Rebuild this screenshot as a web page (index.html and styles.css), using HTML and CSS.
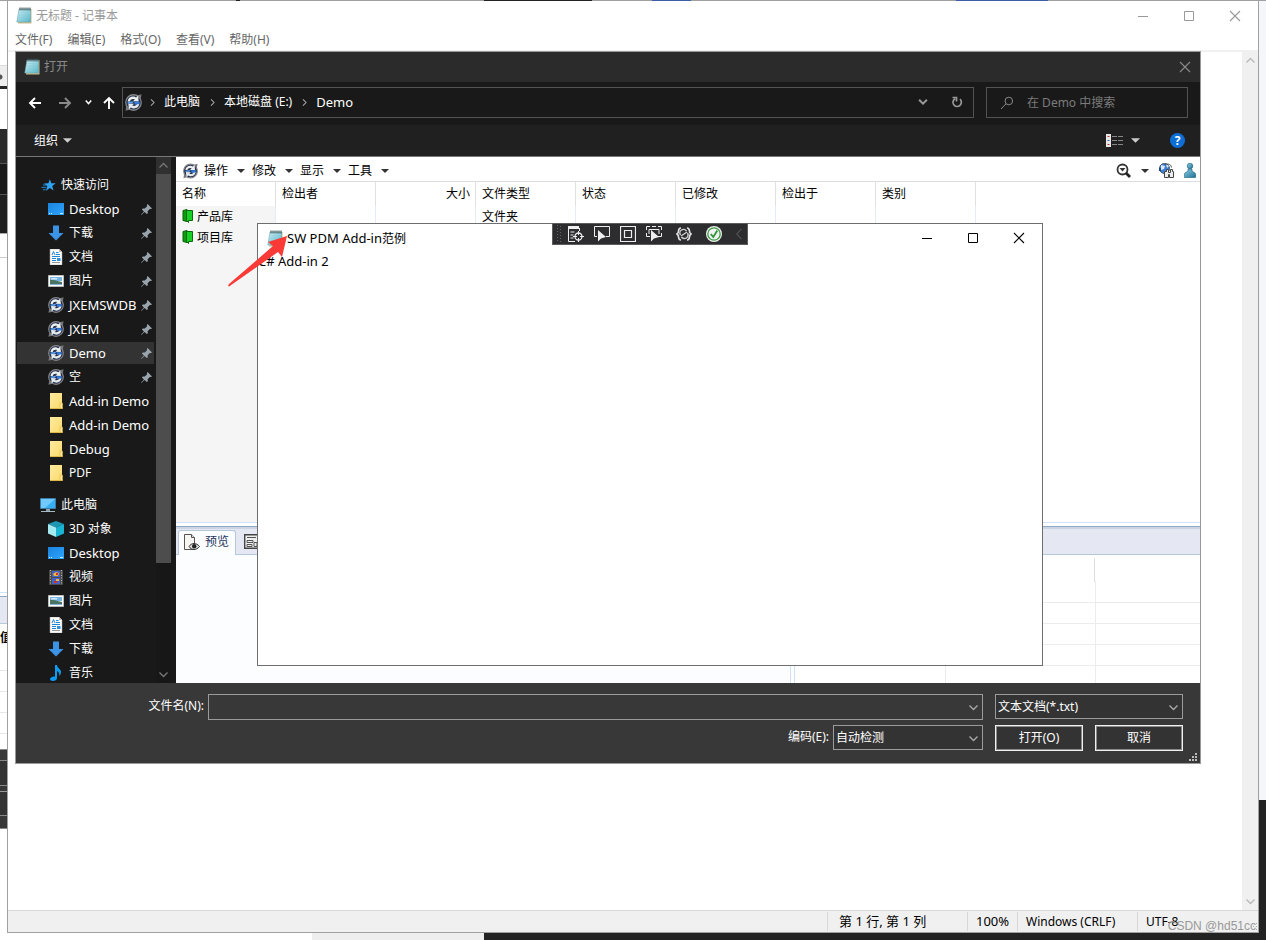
FILE: index.html
```html
<!DOCTYPE html>
<html lang="zh-CN">
<head>
<meta charset="utf-8">
<title>无标题 - 记事本</title>
<link rel="stylesheet" href="styles.css">
</head>
<body class="desktop">
<svg class="defs" aria-hidden="true">
  <defs>
    <linearGradient id="pad" x1="0" y1="0" x2="1" y2="1"><stop offset="0" stop-color="#d5f3f8"/><stop offset="1" stop-color="#4fb3c6"/></linearGradient>
    <linearGradient id="blue" x1="0" y1="0" x2="1" y2="1"><stop offset="0" stop-color="#1a83dd"/><stop offset="1" stop-color="#2ea5ff"/></linearGradient>
    <linearGradient id="fold" x1="0" y1="0" x2="1" y2="1"><stop offset="0" stop-color="#ffeaa0"/><stop offset="1" stop-color="#fbd96b"/></linearGradient>
    <linearGradient id="man" x1="0" y1="0" x2="1" y2="1"><stop offset="0" stop-color="#8fd0e8"/><stop offset="1" stop-color="#1d6f92"/></linearGradient>
  </defs>
  <symbol id="i-notepad" viewBox="0 0 16 17">
    <path d="M4 2h11.500v14.500H2z" fill="#c9b98b"/><path d="M3 2h11.500v13H.8z" fill="url(#pad)" stroke="#6fa9b4" stroke-width=".6"/>
    <path d="M3.500 5.500h10M3.200 8h10M3 10.500h10M2.500 13h10" stroke="#8ccbd6" stroke-width=".6"/>
    <path d="M4 .5v3M6 .5v3M8 .5v3M10 .5v3M12 .5v3M14 .5v3" stroke="#35484d" stroke-width="1"/>
  </symbol>
  <symbol id="i-vault" viewBox="0 0 16 16">
    <circle cx="8" cy="8" r="7.300" fill="#24324a" stroke="#85858a" stroke-width="1.200"/>
    <path d="M11 1.500L15.500.3 14.800 5zM5 14.500L.5 15.700 1.200 11z" fill="#77777c"/>
    <path d="M2.500 7C2.800 3.800 5.500 2 8.500 2.400l2 .8 1.800-1.700.6 5.500-5.400-.2 1.700-1.700C7 4.300 5.200 5 4.700 7z" fill="#eceef0"/>
    <path d="M13.500 9C13.200 12.200 10.500 14 7.500 13.600l-2-.8-1.800 1.700L3.100 9l5.400.2-1.700 1.700c2.200.8 4 .1 4.500-1.900z" fill="#e4e8ec"/>
    <path d="M8.500 7.300l5.300-.3-.3 2.300-4.200.9z" fill="#3578da"/><path d="M2.600 7.600l5.600-.8-1.200 1.900-4.400.4z" fill="#5ba0f0"/>
  </symbol>
  <symbol id="i-star" viewBox="0 0 16 16"><path d="M9.500 1.200l1.500 4.300 4.600.2-3.600 2.900 1.300 4.700-3.800-2.600-4.200 2.800 1.400-4.900L3 5.900l4.800-.3z" fill="#2ea3f2"/><path d="M2 7.500h4M.5 10h5M2 12.500h3" stroke="#2690dc"/></symbol>
  <symbol id="i-desktop" viewBox="0 0 16 16"><path d="M0 2h16v12H0z" fill="url(#blue)"/><path d="M1 12.500h1M3 12.500h1M12 12.500h3" stroke="#cdeaff"/></symbol>
  <symbol id="i-down" viewBox="0 0 16 16"><path d="M5 .5h6V8h4.500L8 15.500.5 8H5z" fill="#3c93e6"/></symbol>
  <symbol id="i-doc" viewBox="0 0 16 16"><path d="M2 0h9l3 3v13H2z" fill="#fafafa" stroke="#aaa" stroke-width=".5"/><path d="M11 0v3h3" fill="#bbb"/><path d="M4 6l1.500-3.500L7 6M8 3.500h2.500M8 5.500h4M4 7.500h8M4 9.500h4M4 11.500h4" stroke="#1f86d8" fill="none"/><path d="M9 9h3.500v3H9z" fill="#2c91df"/><path d="M4 13.500h8" stroke="#999"/></symbol>
  <symbol id="i-pic" viewBox="0 0 16 16"><path d="M.5 2.500h15v11H.5z" fill="#fff" stroke="#bbb"/><path d="M2 4h12v4H2z" fill="#75b5e4"/><path d="M2 7c3-1 6 1 12 2v3H2z" fill="#4a7565"/><path d="M2 11h12v1H2z" fill="#7fb0d8"/><path d="M3 5h6v1.500H3z" fill="#d8ecf8"/></symbol>
  <symbol id="i-folder" viewBox="0 0 16 16"><path d="M2 0h12v16H2z" fill="url(#fold)"/><path d="M12 10h2.500v6H12z" fill="#ffe796" stroke="#d9b13c" stroke-width=".6"/><path d="M2 15.500h12" stroke="#dfb849"/></symbol>
  <symbol id="i-pc" viewBox="0 0 16 16"><path d="M.5 1.500h15v10H.5z" fill="#38aef5" stroke="#3d7ea6"/><path d="M1 2h14L5 11H1z" fill="#71caff"/><path d="M6 12h4v2H6z" fill="#8ca2ae"/><path d="M1 14.500h14" stroke="#a7bac4"/></symbol>
  <symbol id="i-cube" viewBox="0 0 16 16"><path d="M8 0l8 3-8 3.500L0 3z" fill="#1c98b4"/><path d="M0 3l8 3.500V16l-8-3.500z" fill="#a5eaf0"/><path d="M16 3L8 6.500V16l8-3.500z" fill="#18b4d2"/></symbol>
  <symbol id="i-video" viewBox="0 0 16 16"><path d="M1 1h14v15H1z" fill="#4a4a4a"/><path d="M2.500 1v15M13.500 1v15" stroke="#bbb" stroke-dasharray="1 1.500"/><path d="M4 2h8v6H4z" fill="#4461c8"/><path d="M4 9h8v6H4z" fill="#4461c8"/><path d="M5 5l3-2 3 1-1 3H6z" fill="#f3b53a"/><path d="M8 4h2v2H8zM6 12h3v2H6z" fill="#cc3325"/><path d="M8 10h3v2H8z" fill="#efb33c"/></symbol>
  <symbol id="i-music" viewBox="0 0 16 16"><path d="M7 0h2c0 3 4 4 4 7 0 2-1 3-2 4 .5-2 .5-4-2-5v7c0 2-2 3-4 3s-3-1-3-2 2-3 5-2.500z" fill="#0d9af2"/></symbol>
  <symbol id="i-pin" viewBox="0 0 10 10"><path d="M6 0l4 4-1 .6-1-.1-2 2 .2 1.800-.9.9L3.200 7.300.3 10 0 9.700l2.700-2.900L.8 4.900l.9-.9 1.800.1 2-2L5.400 1z" fill="#9aa4ae"/></symbol>
  <symbol id="i-book" viewBox="0 0 12 14"><path d="M1 1.500L5 .5v12l-4-1z" fill="#0c9c0c" stroke="#0a5f0a"/><path d="M4.500 1.500h6v10h-4v2l-2-2z" fill="#18cf23" stroke="#076a0c"/></symbol>
  <symbol id="i-chev" viewBox="0 0 9 9"><path d="M.5 2.500l4 4 4-4" fill="none" stroke="currentColor" stroke-width="1.300"/></symbol>
  <symbol id="i-tri" viewBox="0 0 8 8"><path d="M0 2h8L4 6z" fill="currentColor"/></symbol>
  <symbol id="i-x" viewBox="0 0 12 12"><path d="M1 1l10 10M11 1L1 11" stroke="currentColor" stroke-width="1.100"/></symbol>
  <symbol id="i-max" viewBox="0 0 12 12"><path d="M1.500 1.500h9v9h-9z" fill="none" stroke="currentColor"/></symbol>
  <symbol id="i-min" viewBox="0 0 12 12"><path d="M1 6.500h10" stroke="currentColor"/></symbol>
  <symbol id="i-arrow" viewBox="0 0 14 14"><path d="M13 7H2M7 2L2 7l5 5" fill="none" stroke="currentColor" stroke-width="1.900"/></symbol>
</svg>

<div class="edge edge-top"></div>
<div class="edge edge-left">
  <i class="e1"></i><i class="e2"></i><i class="e3"></i><i class="e4"></i><i class="e5"></i><i class="e6"></i><i class="e7"></i><i class="e8"></i><i class="e9"></i><span class="e10">值</span><i class="e11"></i><i class="e12"></i><i class="e13"></i><i class="e14"></i>
</div>
<div class="edge edge-right"></div>
<div class="edge edge-bottom"></div>

<main class="notepad">
  <header class="np-title"><svg width="16" height="17"><use href="#i-notepad"/></svg><h1>无标题 - 记事本</h1>
    <div class="winbtns"><button aria-label="最小化"><svg width="12" height="12"><use href="#i-min"/></svg></button><button aria-label="最大化"><svg width="12" height="12"><use href="#i-max"/></svg></button><button aria-label="关闭"><svg width="12" height="12"><use href="#i-x"/></svg></button></div>
  </header>
  <nav class="np-menu"><button>文件(F)</button><button>编辑(E)</button><button>格式(O)</button><button>查看(V)</button><button>帮助(H)</button></nav>
  <div class="np-body"><textarea class="np-text" aria-label="正文"></textarea>
    <div class="np-scroll"><svg class="up" width="9" height="9"><use href="#i-chev"/></svg><svg width="9" height="9"><use href="#i-chev"/></svg></div></div>
  <footer class="np-status"><span class="s1">第 1 行, 第 1 列</span><span class="s2">100%</span><span class="s3">Windows (CRLF)</span><span class="s4">UTF-8</span></footer>
</main>

<section class="dialog">
  <header class="dl-title"><svg width="16" height="17"><use href="#i-notepad"/></svg><h2>打开</h2><button aria-label="关闭"><svg width="12" height="12"><use href="#i-x"/></svg></button></header>
  <div class="dl-nav">
    <div class="arrows">
      <button aria-label="后退"><svg width="14" height="14"><use href="#i-arrow"/></svg></button>
      <button class="fwd" aria-label="前进"><svg width="14" height="14"><use href="#i-arrow"/></svg></button>
      <button class="hist" aria-label="历史"><svg width="7" height="7" viewBox="0 0 9 9"><path d="M1 2l3.500 4L8 2" fill="none" stroke="currentColor" stroke-width="2"/></svg></button>
      <button class="upa" aria-label="上移"><svg width="14" height="14"><use href="#i-arrow"/></svg></button>
    </div>
    <div class="address">
      <svg width="17" height="17"><use href="#i-vault"/></svg>
      <svg class="sep" width="7" height="7"><use href="#i-chev"/></svg><a href="#">此电脑</a>
      <svg class="sep" width="7" height="7"><use href="#i-chev"/></svg><a href="#">本地磁盘 (E:)</a>
      <svg class="sep" width="7" height="7"><use href="#i-chev"/></svg><a href="#">Demo</a>
      <button class="drop" aria-label="以前的位置"><svg width="10" height="10" viewBox="0 0 9 9"><path d="M1 2.500l3.500 3.500L8 2.500" fill="none" stroke="currentColor" stroke-width="1.800"/></svg></button>
      <button class="reload" aria-label="刷新"><svg width="12" height="12" viewBox="0 0 12 12"><path d="M9 3.200A4.200 4.200 0 1 1 4 2.700M1.500 1.500h4v4" fill="none" stroke="currentColor" stroke-width="1.700"/></svg></button>
    </div>
    <label class="search"><svg width="14" height="14" viewBox="0 0 14 14"><circle cx="8.800" cy="5" r="3.800" fill="none" stroke="currentColor"/><path d="M6 7.800L1 13" stroke="currentColor"/></svg><input type="search" placeholder="在 Demo 中搜索"></label>
  </div>
  <div class="dl-cmd">
    <button class="org">组织 <svg width="9" height="9"><use href="#i-tri"/></svg></button>
    <button class="view" aria-label="视图"><svg width="17" height="13" viewBox="0 0 17 13"><path d="M0 0h5v13H0z" fill="#e8e8e8"/><path d="M1.500 2.500h2M1.500 10.500h2" stroke="#b33"/><path d="M1.500 6.500h2" stroke="#36b"/><path d="M6 2.500h11M6 6.500h11M6 10.500h11" stroke="#888" stroke-dasharray="5 1"/></svg><svg width="9" height="9"><use href="#i-tri"/></svg></button>
    <button class="help">?</button>
  </div>

  <div class="dl-main">
    <aside class="side">
      <ul class="tree">
        <li class="root"><svg width="15" height="15"><use href="#i-star"/></svg>快速访问</li>
        <li><svg width="16" height="16"><use href="#i-desktop"/></svg><span class="lat">Desktop</span><svg class="pin"><use href="#i-pin"/></svg></li>
        <li><svg width="16" height="16"><use href="#i-down"/></svg><span>下载</span><svg class="pin"><use href="#i-pin"/></svg></li>
        <li><svg width="16" height="16"><use href="#i-doc"/></svg><span>文档</span><svg class="pin"><use href="#i-pin"/></svg></li>
        <li><svg width="16" height="16"><use href="#i-pic"/></svg><span>图片</span><svg class="pin"><use href="#i-pin"/></svg></li>
        <li><svg width="16" height="16"><use href="#i-vault"/></svg><span class="lat">JXEMSWDB</span><svg class="pin"><use href="#i-pin"/></svg></li>
        <li><svg width="16" height="16"><use href="#i-vault"/></svg><span class="lat">JXEM</span><svg class="pin"><use href="#i-pin"/></svg></li>
        <li class="on"><svg width="16" height="16"><use href="#i-vault"/></svg><span class="lat">Demo</span><svg class="pin"><use href="#i-pin"/></svg></li>
        <li><svg width="16" height="16"><use href="#i-vault"/></svg><span>空</span><svg class="pin"><use href="#i-pin"/></svg></li>
        <li><svg width="16" height="16"><use href="#i-folder"/></svg><span class="lat">Add-in Demo</span></li>
        <li><svg width="16" height="16"><use href="#i-folder"/></svg><span class="lat">Add-in Demo</span></li>
        <li><svg width="16" height="16"><use href="#i-folder"/></svg><span class="lat">Debug</span></li>
        <li><svg width="16" height="16"><use href="#i-folder"/></svg><span>PDF</span></li>
      </ul>
      <ul class="tree">
        <li class="root pc"><svg width="16" height="16"><use href="#i-pc"/></svg>此电脑</li>
        <li><svg width="16" height="16"><use href="#i-cube"/></svg><span>3D 对象</span></li>
        <li><svg width="16" height="16"><use href="#i-desktop"/></svg><span class="lat">Desktop</span></li>
        <li><svg width="16" height="16"><use href="#i-video"/></svg><span>视频</span></li>
        <li><svg width="16" height="16"><use href="#i-pic"/></svg><span>图片</span></li>
        <li><svg width="16" height="16"><use href="#i-doc"/></svg><span>文档</span></li>
        <li><svg width="16" height="16"><use href="#i-down"/></svg><span>下载</span></li>
        <li><svg width="16" height="16"><use href="#i-music"/></svg><span>音乐</span></li>
      </ul>
    </aside>
    <div class="side-scroll"><svg class="up" width="9" height="9"><use href="#i-chev"/></svg><div class="thumb"></div><svg width="9" height="9"><use href="#i-chev"/></svg></div>

    <div class="vault">
      <div class="vt-bar">
        <svg width="15" height="16"><use href="#i-vault"/></svg>
        <button>操作<svg width="8" height="8"><use href="#i-tri"/></svg></button><button>修改<svg width="8" height="8"><use href="#i-tri"/></svg></button><button>显示<svg width="8" height="8"><use href="#i-tri"/></svg></button><button>工具<svg width="8" height="8"><use href="#i-tri"/></svg></button>
        <div class="vt-right">
          <svg width="15" height="15" viewBox="0 0 15 15"><circle cx="6.500" cy="6.500" r="5" fill="none" stroke="#333" stroke-width="1.800"/><path d="M3.500 5h6l-3 3.500z" fill="#333"/><path d="M10 10l4 4" stroke="#222" stroke-width="2.800"/></svg>
          <svg class="t" width="8" height="8"><use href="#i-tri"/></svg>
          <svg width="15" height="15" viewBox="0 0 15 15"><circle cx="5.500" cy="5.500" r="5" fill="#3d7fd6" stroke="#456"/><path d="M2 2l4 1-1 3-3 1zM7 1l3 2-2 2z" fill="#dfe8ee"/><path d="M0 5h2v3H0z" fill="#174a86"/><path d="M6 1.500c4-1 6 0 6.500 3" fill="none" stroke="#444"/><path d="M5.500 8.500h2v-2h2v3h2v-3h2v2h1v6h-4v-3h-1v3h-4z" fill="#eee" stroke="#444"/></svg>
          <svg width="12" height="15" viewBox="0 0 12 15"><circle cx="6" cy="3" r="2.800" fill="url(#man)" stroke="#1a5e7c" stroke-width=".6"/><path d="M4 6h4v2l3 2c1 1 1 3 .5 4.500H.5C0 13 0 11 1 10l3-2z" fill="url(#man)" stroke="#1a5e7c" stroke-width=".6"/></svg>
        </div>
      </div>
      <div class="vt-list">
        <table class="files">
          <colgroup><col class="c"><col class="c"><col class="c"><col class="c"><col class="c"><col class="c"><col class="c"><col class="c"><col></colgroup>
          <thead><tr><th>名称</th><th>检出者</th><th class="num">大小</th><th>文件类型</th><th>状态</th><th>已修改</th><th>检出于</th><th>类别</th><th></th></tr></thead>
          <tbody>
            <tr><td><svg width="12" height="14"><use href="#i-book"/></svg>产品库</td><td></td><td></td><td>文件夹</td><td></td><td></td><td></td><td></td><td></td></tr>
            <tr><td><svg width="12" height="14"><use href="#i-book"/></svg>项目库</td><td></td><td></td><td></td><td></td><td></td><td></td><td></td><td></td></tr>
            <tr class="rest"><td></td><td></td><td></td><td></td><td></td><td></td><td></td><td></td><td></td></tr>
          </tbody>
        </table>
      </div>
      <div class="tabs">
        <button class="tab on"><svg width="17" height="17" viewBox="0 0 17 17"><path d="M1.500.5h7l3 3v12h-10z" fill="#f6f6f2" stroke="#555"/><path d="M8.500.5v3h3" fill="#ddd" stroke="#555"/><path d="M6 12.500c2.500-4 7.500-4 10.500 0-3 4-8 4-10.500 0z" fill="#ddd" stroke="#333"/><circle cx="11.200" cy="12.300" r="2.200" fill="#222"/></svg>预览</button>
        <button class="tab" aria-label="数据卡"><svg width="16" height="15" viewBox="0 0 16 15"><path d="M.7.700h14.600v13.600H.7z" fill="#eee" stroke="#444" stroke-width="1.400"/><path d="M3 3.500h9M3 6.500h6v2H3zM3 10.500h5v2H3zM10 8.500h3v4h-3z" fill="none" stroke="#555"/></svg></button>
      </div>
      <div class="lower"><div class="preview"></div><div class="split"></div>
        <div class="grid"><i class="gh"></i><i></i><i></i><i></i></div></div>
    </div>
  </div>

  <form class="dl-foot">
    <div class="frow"><label class="fl" for="fn">文件名(N):</label><span class="combo"><input id="fn" type="text"><svg width="9" height="9"><use href="#i-chev"/></svg></span>
      <span class="combo type"><select aria-label="文件类型"><option>文本文档(*.txt)</option></select><svg width="9" height="9"><use href="#i-chev"/></svg></span></div>
    <div class="frow second"><label for="enc">编码(E):</label><span class="combo enc"><select id="enc"><option>自动检测</option></select><svg width="9" height="9"><use href="#i-chev"/></svg></span>
      <div class="acts"><button type="button">打开(O)</button><button type="button">取消</button></div></div>
    <svg class="grip" width="9" height="9" viewBox="0 0 9 9"><path d="M7 0h2v2H7zM4 3h2v2H4zM7 3h2v2H7zM1 6h2v2H1zM4 6h2v2H4zM7 6h2v2H7z" fill="#bbb"/></svg>
  </form>
</section>

<section class="popup">
  <header class="pp-title"><svg width="16" height="17"><use href="#i-notepad"/></svg><h2><span class="lat">SW PDM Add-in</span>范例</h2>
    <div class="winbtns"><button aria-label="最小化"><svg width="12" height="12"><use href="#i-min"/></svg></button><button aria-label="最大化"><svg width="12" height="12"><use href="#i-max"/></svg></button><button aria-label="关闭"><svg width="12" height="12"><use href="#i-x"/></svg></button></div></header>
  <p class="pp-text">C# Add-in 2</p>
</section>

<div class="debugbar">
  <svg width="6" height="18" viewBox="0 0 6 18"><path d="M1.500 0v18M4.500 1v17" stroke="#666" stroke-dasharray="1 2"/></svg>
  <button aria-label="实时可视化树"><svg width="16" height="16" viewBox="0 0 16 16"><path d="M0 0h11v3H0z" fill="#eee"/><path d="M.5 2v13.500H7M2.500 6h4M2.500 9h3M2.500 12h3M11.500 2v3" fill="none" stroke="#eee"/><circle cx="10.500" cy="10.500" r="3.500" fill="none" stroke="#eee" stroke-width="1.300"/><path d="M10.500 5v4M10.500 12v4M5 10.500h4M12 10.500h4" stroke="#eee"/></svg></button>
  <button aria-label="选择元素"><svg width="16" height="16" viewBox="0 0 16 16"><path d="M3 10.500H.5v-10h15v10H12" fill="none" stroke="#eee"/><path d="M4 4v11.500l3-3L12 11z" fill="#eee"/></svg></button>
  <button aria-label="布局装饰"><svg width="16" height="16" viewBox="0 0 16 16"><path d="M.5.500h15v15H.5zM4.500 4.500h7v7h-7z" fill="none" stroke="#eee" stroke-width="1.200"/></svg></button>
  <button aria-label="跟踪焦点"><svg width="16" height="16" viewBox="0 0 16 16"><path d="M.5 4V.5H4M12 .5h3.500V4M15.500 7v3.500H12M.5 7v3.500H4M6 .5h4M3 8V3.500h10V8" fill="none" stroke="#eee"/><path d="M5 4v11.500l3-3 5-1.500z" fill="#eee"/></svg></button>
  <button class="bar" aria-label="绑定失败"><svg width="16" height="14" viewBox="0 0 16 14"><path d="M5 1C1 1 4 5.500 1 7c3 1.500 0 6 4 6M11 1c4 0 1 4.500 4 6-3 1.500 0 6-4 6" fill="none" stroke="#e2e2e2" stroke-width="1.700"/><path d="M4.500 8a3.500 3.500 0 0 1 6-4M11.500 6a3.500 3.500 0 0 1-6 4M5 9l6-4" fill="none" stroke="#ccc" stroke-width="1.500"/></svg></button>
  <button class="bar" aria-label="热重载"><svg width="16" height="16" viewBox="0 0 16 16"><circle cx="8" cy="8" r="8" fill="#f2f2f2"/><circle cx="8" cy="8" r="6.200" fill="none" stroke="#3a9b43" stroke-width="1.300"/><path d="M4.800 8l2.500 3 4-6.500" fill="none" stroke="#2d9438" stroke-width="1.800"/></svg></button>
  <button class="fold" aria-label="收起"><svg width="6" height="12" viewBox="0 0 6 12"><path d="M5.500 1L.7 6l4.800 5" fill="none" stroke="#666"/></svg></button>
</div>

<svg class="pointer" width="62" height="54" viewBox="0 0 62 54"><path d="M60 2L41 8l5 4L2 50l-1 2 1 .5L51 18l4 5z" fill="#f93a37"/></svg>
<span class="mark">CSDN @hd51cc</span><span class="mark-dots"></span>
</body>
</html>
```

FILE: styles.css
```css
* { box-sizing: border-box; }
body, h1, h2, ul, p { margin: 0; padding: 0; }
.desktop { position: relative; height: 100vh; overflow: hidden; background: #fff; color: #000;
  font: 12px/16px "Noto Sans", "Noto Sans CJK SC", sans-serif; }
button, input, select, textarea { font: inherit; color: inherit; background: none; border: 0; padding: 0; margin: 0; border-radius: 0; outline: 0; }
button { display: inline-flex; align-items: center; justify-content: center; }
svg { flex: none; display: block; }
h1, h2 { font-size: 12px; line-height: 16px; font-weight: 400; }
a { color: inherit; text-decoration: none; }
.defs { position: absolute; width: 0; height: 0; }
.lat { font-size: 13px; }
.up { transform: rotate(180deg); }

/* strips of the windows behind */
.edge { position: absolute; overflow: hidden; }
.edge-top { left: 0; right: 0; top: 0; height: 1px; z-index: 2;
  background: linear-gradient(90deg, #a0a0a0 236px, #222 236px 240px, #a0a0a0 240px 484px, #222 484px 592px, #a0a0a0 592px 652px, #3c5ea8 652px 691px, #a0a0a0 691px 956px, #3c5ea8 956px 1048px, #a0a0a0 1048px); }
.edge-left { left: 0; top: 0; width: 8px; bottom: 7px; display: flex; flex-direction: column; }
.edge-left > * { flex: none; display: block; }
.e1 { height: 66px; border-bottom: 1px solid #ddd; }
.e2 { height: 20px; background: radial-gradient(circle at 0 11px, #555 2px, #eee 3px); }
.e3 { height: 3px; background: #262626; }
.e4 { height: 40px; }
.e5 { height: 35px; background: #2b2b2b; border-bottom: 1px solid #555; }
.e6 { height: 31px; background: #191919; border-bottom: 1px solid #555; }
.e7 { height: 38px; background: #202020; }
.e8 { height: 25px; border-top: 1px solid #aaa; border-bottom: 1px solid #ccc; }
.e9 { height: 366px; background: linear-gradient(#fff 334px, #cfe3f5 334px 335px, #fff 335px 338px, #8fa9c4 338px 339px, #e5e8f3 339px 365px, #b9c9dc 365px); }
.e10 { height: 26px; line-height: 28px; font-weight: 700; }
.e11 { height: 99px; background: repeating-linear-gradient(#fff 0 20px, #e6e6e6 20px 21px); }
.e12 { height: 12px; background: #383838; border-top: 1px solid #888; border-bottom: 1px solid #888; }
.e13 { height: 31px; background: linear-gradient(#333 24px, #888 24px 25px, #383838 25px 30px, #999 30px); }
.e14 { height: 37px; background: linear-gradient(#333 23px, #888 23px 24px, #383838 24px 36px, #888 36px); }
.edge-right { right: 0; top: 0; bottom: 0; width: 7px; background: linear-gradient(#f4f6f9 800px, #232323 800px); }
.edge-bottom { left: 0; right: 0; bottom: 0; height: 7px; background: linear-gradient(90deg, #fff 312px, #eee 312px 484px, #232323 484px); }

/* notepad */
.notepad { position: absolute; left: 7px; top: 0; right: 7px; bottom: 7px; border: 1px solid #a0a0a0; background: #fff; display: flex; flex-direction: column; }
.np-title { height: 29px; display: flex; align-items: center; gap: 4px; padding-left: 8px; color: #999; }
.winbtns { margin-left: auto; display: flex; }
.winbtns button { width: 46px; height: 28px; }
.np-menu { height: 20px; display: flex; align-items: center; gap: 15px; padding-left: 7px; color: #666; }
.np-body { flex: 1; min-height: 0; display: flex; border-top: 2px solid #f0f0f0; }
.np-text { flex: 1; resize: none; }
.np-scroll { width: 16px; background: #f0f0f0; color: #b8b8b8; display: flex; flex-direction: column; align-items: center; justify-content: space-between; padding: 4px 0; }
.np-scroll path { stroke-width: 2; }
.np-status { height: 22px; background: #f0f0f0; border-top: 1px solid #d7d7d7; display: flex; justify-content: flex-end; }
.np-status span { border-left: 1px solid #d7d7d7; margin: 1px 0; padding-left: 8px; line-height: 19px; }
.np-status .s1 { width: 140px; padding-left: 11px; font-size: 13px; }
.np-status .s2 { width: 50px; font-size: 13px; }
.np-status .s3 { width: 120px; }
.np-status .s4 { width: 121px; }

/* open dialog */
.dialog { position: absolute; left: 15px; top: 51px; right: 65px; bottom: 176px; border: 1px solid #999; background: #191919; color: #fff; display: flex; flex-direction: column; }
.dl-title { height: 30px; background: #2b2b2b; color: #8a8a8a; display: flex; align-items: center; gap: 4px; padding: 0 9px 1px 8px; }
.dl-title button { margin-left: auto; }
.dl-nav { height: 43px; padding: 5px 12px 7px 12px; display: flex; background: #191919; }
.arrows { width: 94px; display: flex; align-items: center; }
.arrows button { width: 14px; }
.arrows .fwd { margin-left: 16px; color: #8a8a8a; transform: scaleX(-1); }
.arrows .hist { margin-left: 9px; }
.arrows .upa { margin-left: 7px; transform: rotate(90deg); }
.address { flex: 1; display: flex; align-items: center; border: 1px solid #535353; padding: 0 0 1px 2px; }
.address a { margin: 0 9px 0 8px; }
.address a:last-of-type { font-size: 13px; }
.sep { margin-left: 7px; transform: rotate(-90deg); color: #aaa; }
.sep ~ .sep { margin-left: 0; }
.drop { margin-left: auto; width: 34px; color: #999; align-self: stretch; }
.reload { width: 33px; color: #999; align-self: stretch; }
.search { width: 202px; margin-left: 12px; border: 1px solid #535353; display: flex; align-items: center; padding-left: 13px; gap: 13px; color: #888; }
.search input { width: 150px; }
.search input::placeholder { color: #7b7b7b; opacity: 1; }
.dl-cmd { height: 32px; background: #202020; display: flex; align-items: center; padding: 0 15px 0 18px; border-bottom: 1px solid #777; }
.org { gap: 5px; }
.dl-cmd .org svg, .view svg + svg { color: #ccc; }
.view { margin-left: auto; gap: 8px; }
.help { margin-left: 30px; width: 15px; height: 15px; border-radius: 50%; background: #0c6fd6; font-weight: 700; font-size: 12px; }
.dl-main { flex: 1; min-height: 0; display: flex; }
.side { width: 140px; padding-top: 16px; overflow: hidden; }
.tree { list-style: none; margin-bottom: 8px; }
.tree li { height: 24px; display: flex; align-items: center; gap: 5px; padding: 0 4px 0 32px; white-space: nowrap; }
.tree .root { padding-left: 25px; }
.tree .pc { padding-left: 24px; }
.tree .on { background: linear-gradient(#333, #333) 1px 1px / 137px 22px no-repeat; }
.pin { width: 11px; height: 11px; margin-left: auto; }
.side-scroll { width: 15px; background: #171717; color: #777; display: flex; flex-direction: column; align-items: center; }
.side-scroll .up { box-sizing: content-box; padding: 4px 3px; background: #303030; }
.side-scroll .thumb { width: 15px; height: 389px; flex: 0 1 auto; background: #4d4d4d; margin-bottom: auto; }
.side-scroll svg:last-child { margin-bottom: 4px; }
.vault { flex: 1; min-width: 0; margin-left: 5px; background: #fff; color: #000; display: flex; flex-direction: column; }
.vt-bar { height: 25px; display: flex; align-items: center; padding: 3px 4px 0 7px; border-bottom: 1px solid #ddd; }
.vt-bar > button { width: 48px; justify-content: flex-start; gap: 9px; }
.vt-bar > svg { margin-right: 6px; }
.vt-bar button svg, .t { color: #333; }
.vt-right { margin-left: auto; display: flex; align-items: center; gap: 10px; }
.vt-list { flex: 1; min-height: 0; }
.files { width: 100%; height: 100%; table-layout: fixed; border-collapse: separate; border-spacing: 0; }
.files .c { width: 100px; }
.files th, .files td { padding: 0 5px 0 6px; text-align: left; font-weight: 400; height: 21px; line-height: 16px; border-right: 1px solid #e3edf7; white-space: nowrap; }
.files th { height: 24px; border-right-color: #e0e0e0; }
.files th:last-child, .files td:last-child { border-right: 0; }
.files .num { text-align: right; }
.files td:first-child { background: #f5f5f5; }
.files td svg { display: inline-block; vertical-align: -2px; margin-right: 3px; }
.files .rest td { height: auto; }
.tabs { height: 33px; display: flex; align-items: flex-end; padding: 0 2px; background: linear-gradient(#cfe3f5 1px, #fff 1px 4px, #8fa9c4 4px 5px, #ccd5e4 5px 7px, #e5e8f3 7px 32px, #b3c7dd 32px); }
.tab { height: 25px; width: 36px; padding: 0 0 2px 8px; justify-content: flex-start; color: #1f355e; }
.tab.on { width: 58px; padding-left: 4px; gap: 5px; background: #fbfdff; border: 1px solid #b3c7dd; border-bottom: 0; border-radius: 3px 3px 0 0; }
.lower { height: 128px; display: flex; overflow: hidden; }
.preview { flex: none; width: 60%; background: #fbfdff; }
.split { flex: none; width: 5px; border: 1px solid #cfe3f5; border-width: 0 1px; }
.grid { flex: 1; display: flex; flex-direction: column;
  background: linear-gradient(#ececec, #ececec) 150px 26px / 1px 100% no-repeat, linear-gradient(#ececec, #ececec) 300px 26px / 1px 100% no-repeat; }
.grid i { flex: none; height: 21px; border-bottom: 1px solid #ececec; }
.grid .gh { height: 48px; background: linear-gradient(#ddd, #ddd) 299px 3px / 1px 24px no-repeat; }
.dl-foot { position: relative; height: 80px; background: #383838; padding: 11px 17px 0 16px; display: flex; flex-direction: column; gap: 5px; }
.frow { display: flex; align-items: flex-start; gap: 4px; }
.frow label { line-height: 24px; }
.fl { width: 172px; text-align: right; }
.combo { position: relative; flex: 1; height: 26px; border: 1px solid #9b9b9b; display: flex; }
.combo input, .combo select { width: 100%; appearance: none; padding: 0 3px; }
.combo svg { position: absolute; right: 4px; top: 8px; color: #aaa; pointer-events: none; }
.combo.type { flex: none; width: 188px; margin-left: 8px; height: 25px; background: #333; }
.combo.type select, .combo.enc select { padding: 0 2px; }
.second { justify-content: flex-end; }
.combo.enc { flex: none; width: 150px; height: 25px; background: #333; }
.acts { display: flex; gap: 12px; margin-left: 8px; }
.acts button { width: 88px; height: 26px; background: #333; border: 1px solid #f0f0f0; box-shadow: inset 0 0 0 1px #8a8a8a; }
.grip { position: absolute; right: 3px; bottom: 1px; }

/* add-in message window */
.popup { position: absolute; left: 257px; top: 223px; right: 223px; bottom: 274px; border: 1px solid #6e6e6e; background: #fff; }
.pp-title { height: 28px; display: flex; align-items: center; gap: 4px; padding-left: 9px; }
.pp-text { font-size: 13px; line-height: 18px; }
.debugbar { position: absolute; left: 552px; top: 223px; width: 196px; height: 22px; background: #2d2d30; border: 1px solid #5c5c5c; display: flex; align-items: center; padding-left: 3px; }
.debugbar button { margin-left: 10px; }
.debugbar > svg + button { margin-left: 6px; }
.debugbar .bar { margin-left: 14px; }
.debugbar .fold { margin-left: 14px; }
.pointer { position: absolute; left: 227px; top: 234px; }
.mark { position: absolute; right: 10px; bottom: 6px; color: #999; font: 12px/16px "Liberation Sans", sans-serif; }
.mark-dots { position: absolute; right: 9px; bottom: 10px; width: 5px; height: 8px; background: radial-gradient(#aaa 1px, transparent 1px) 0 0 / 3px 3px; }
```
